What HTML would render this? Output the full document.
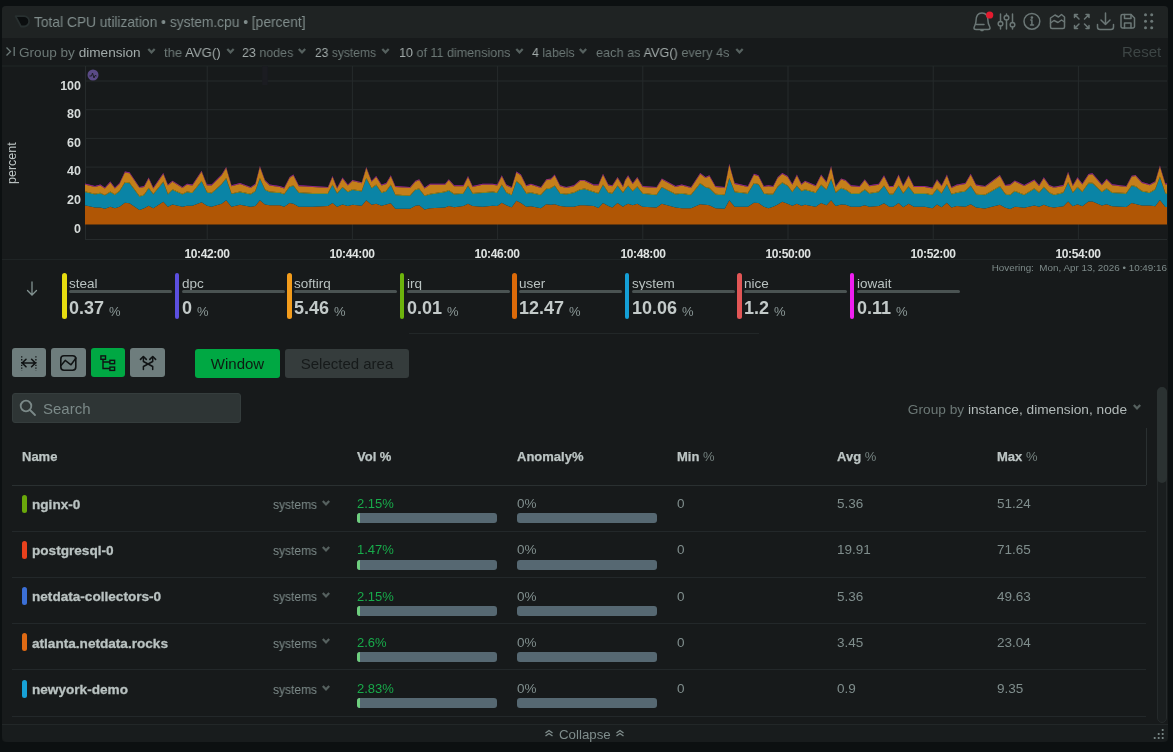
<!DOCTYPE html>
<html><head><meta charset="utf-8">
<style>
*{box-sizing:border-box;margin:0;padding:0}
html,body{width:1173px;height:752px;overflow:hidden;background:#0c1011;font-family:"Liberation Sans",sans-serif}
.abs{position:absolute}
.panel{position:absolute;left:1.5px;top:5.5px;width:1166px;height:736.5px;background:#171a1b;border-radius:4px;overflow:hidden}
.hdr{position:absolute;left:0;top:0;width:100%;height:32px;background:#1f2323}
.t{position:absolute;white-space:nowrap;line-height:1;will-change:transform}
.g{color:#6c7876}
.w{color:#a2abaa}
.chev{position:absolute;width:8px;height:5px}
</style></head><body>
<div class="panel">
  <div class="hdr"></div>
</div>

<!-- header title -->
<svg class="abs" style="left:13px;top:14px" width="18" height="16" viewBox="0 0 18 16">
  <path d="M2.5 2.2 H11 A5.15 5.15 0 0 1 11 12.5 H8 Z" fill="#0b0e0f" stroke="#283030" stroke-width="1.8" stroke-linejoin="round"/>
</svg>
<div class="t g" style="left:34px;top:15px;font-size:14.5px;color:#808d8c;transform:scaleX(0.95);transform-origin:0 0">Total CPU utilization • system.cpu • [percent]</div>

<!-- header icons -->
<svg class="abs" style="left:966px;top:8px" width="200" height="28" viewBox="966 8 200 28" fill="none" stroke="#6b7776" stroke-width="1.5" stroke-linecap="round" stroke-linejoin="round">
  <!-- bell -->
  <path d="M982 13 C977 13 976 17 976 21 C976 25 974 26 974 28 C974 29 975 29.5 976 29.5 H988 C989 29.5 990 29 990 28 C990 26 988 25 988 21 C988 17 987 13 982 13 Z"/>
  <path d="M976.5 24.5 H984"/>
  <path d="M981 30.5 H983"/>
  <circle cx="989.7" cy="15" r="3.6" fill="#e31b2f" stroke="none"/>
  <!-- sliders -->
  <path d="M1000.5 14 V21.5 M1000.5 26 V29 M1006.5 14 V15.5 M1006.5 20 V29 M1012.5 14 V22.5 M1012.5 27 V29"/>
  <circle cx="1000.5" cy="23.7" r="2.3"/>
  <circle cx="1006.5" cy="17.7" r="2.3"/>
  <circle cx="1012.5" cy="24.7" r="2.3"/>
  <!-- info -->
  <circle cx="1031.9" cy="21.3" r="7.9"/>
  <path d="M1031.9 20 V25 M1030.5 25 H1033.5 M1030.8 20 H1032"/>
  <circle cx="1031.9" cy="17.6" r="0.6" fill="#6b7776"/>
  <!-- chart icon -->
  <path d="M1050.5 18 L1055 15 L1058.5 17 L1061.5 14.5 L1064.5 17 V27 A1.5 1.5 0 0 1 1063 28.5 H1052 A1.5 1.5 0 0 1 1050.5 27 Z"/>
  <path d="M1050.5 23 L1054 20.5 L1058 22.5 L1061.5 20 L1064.5 22"/>
  <!-- expand -->
  <path d="M1074.5 14.5 L1079 19 M1074.5 14.5 H1077.5 M1074.5 14.5 V17.5"/>
  <path d="M1089 14.5 L1084.5 19 M1089 14.5 H1086 M1089 14.5 V17.5"/>
  <path d="M1074.5 28.5 L1079 24 M1074.5 28.5 H1077.5 M1074.5 28.5 V25.5"/>
  <path d="M1089 28.5 L1084.5 24 M1089 28.5 H1086 M1089 28.5 V25.5"/>
  <!-- download -->
  <path d="M1105.5 13 V24.5 M1101 20 L1105.5 24.5 L1110 20"/>
  <path d="M1097.5 24.5 V27 A2.5 2.5 0 0 0 1100 29.5 H1111 A2.5 2.5 0 0 0 1113.5 27 V24.5"/>
  <!-- save -->
  <path d="M1121 16 A1.5 1.5 0 0 1 1122.5 14.5 H1131 L1134.5 18 V26.5 A1.5 1.5 0 0 1 1133 28 H1122.5 A1.5 1.5 0 0 1 1121 26.5 Z"/>
  <path d="M1124.5 14.5 V18.5 H1131 V14.5 M1124.5 28 V23 H1131 V28"/>
  <!-- dots -->
  <g fill="#6b7776" stroke="none">
    <circle cx="1145.5" cy="14.7" r="1.5"/><circle cx="1151.7" cy="14.7" r="1.5"/>
    <circle cx="1145.5" cy="21.2" r="1.5"/><circle cx="1151.7" cy="21.2" r="1.5"/>
    <circle cx="1145.5" cy="27.7" r="1.5"/><circle cx="1151.7" cy="27.7" r="1.5"/>
  </g>
</svg>

<!-- toolbar row -->
<svg class="abs" style="left:5px;top:46px" width="12" height="12" viewBox="0 0 12 12" fill="none" stroke="#6c7978" stroke-width="1.3">
  <path d="M1.5 1.5 L5.5 5.5 L1.5 9.5 M9.2 1 V10"/>
</svg>
<div class="t" style="left:19px;top:46.3px;font-size:13.6px"><span class="g">Group by </span><span class="w">dimension</span></div>
<div class="t" style="left:164px;top:46.3px;font-size:13.6px;transform:scaleX(0.964);transform-origin:0 0"><span class="g">the </span><span class="w">AVG()</span></div>
<div class="t" style="left:242px;top:46.3px;font-size:13.6px;transform:scaleX(0.916);transform-origin:0 0"><span class="w">23 </span><span class="g">nodes</span></div>
<div class="t" style="left:315px;top:46.3px;font-size:13.6px;transform:scaleX(0.888);transform-origin:0 0"><span class="w">23 </span><span class="g">systems</span></div>
<div class="t" style="left:399px;top:46.3px;font-size:13.6px;transform:scaleX(0.924);transform-origin:0 0"><span class="w">10 </span><span class="g">of 11 dimensions</span></div>
<div class="t" style="left:532px;top:46.3px;font-size:13.6px;transform:scaleX(0.91);transform-origin:0 0"><span class="w">4 </span><span class="g">labels</span></div>
<div class="t" style="left:596px;top:46.3px;font-size:13.6px;transform:scaleX(0.936);transform-origin:0 0"><span class="g">each as </span><span class="w">AVG()</span><span class="g"> every 4s</span></div>
<div class="t" style="left:1122px;top:44px;font-size:15px;color:#3d4545">Reset</div>
<svg class="abs" style="left:0;top:0" width="1173" height="70" fill="#56615f"><path d="M147.5 49.8 L149.1 48.3 L151.5 50.8 L153.9 48.3 L155.5 49.8 L151.5 54 Z"/><path d="M226.5 49.8 L228.1 48.3 L230.5 50.8 L232.9 48.3 L234.5 49.8 L230.5 54 Z"/><path d="M298 49.8 L299.6 48.3 L302 50.8 L304.4 48.3 L306 49.8 L302 54 Z"/><path d="M381.5 49.8 L383.1 48.3 L385.5 50.8 L387.9 48.3 L389.5 49.8 L385.5 54 Z"/><path d="M515.5 49.8 L517.1 48.3 L519.5 50.8 L521.9 48.3 L523.5 49.8 L519.5 54 Z"/><path d="M579 49.8 L580.6 48.3 L583 50.8 L585.4 48.3 L587 49.8 L583 54 Z"/><path d="M735.5 49.8 L737.1 48.3 L739.5 50.8 L741.9 48.3 L743.5 49.8 L739.5 54 Z"/></svg>

<!-- chart -->
<svg class="abs" style="left:0;top:0" width="1173" height="262">
  <line x1="2" y1="66" x2="1167" y2="66" stroke="#212627" stroke-width="1"/>
  <line x1="85.5" y1="66" x2="85.5" y2="240" stroke="#262b2c" stroke-width="1"/>
  <line x1="85" y1="239.5" x2="1167" y2="239.5" stroke="#262b2c" stroke-width="1"/><line x1="2" y1="259.5" x2="1167" y2="259.5" stroke="#1f2425" stroke-width="1"/>
  <line x1="85" y1="81.0" x2="1167" y2="81.0" stroke="#262b2c" stroke-width="1"/><line x1="85" y1="109.7" x2="1167" y2="109.7" stroke="#262b2c" stroke-width="1"/><line x1="85" y1="138.4" x2="1167" y2="138.4" stroke="#262b2c" stroke-width="1"/><line x1="85" y1="167.1" x2="1167" y2="167.1" stroke="#262b2c" stroke-width="1"/><line x1="85" y1="195.8" x2="1167" y2="195.8" stroke="#262b2c" stroke-width="1"/><line x1="207.2" y1="66" x2="207.2" y2="240" stroke="#262b2c" stroke-width="1"/><line x1="352.4" y1="66" x2="352.4" y2="240" stroke="#262b2c" stroke-width="1"/><line x1="497.6" y1="66" x2="497.6" y2="240" stroke="#262b2c" stroke-width="1"/><line x1="642.8" y1="66" x2="642.8" y2="240" stroke="#262b2c" stroke-width="1"/><line x1="788.0" y1="66" x2="788.0" y2="240" stroke="#262b2c" stroke-width="1"/><line x1="933.2" y1="66" x2="933.2" y2="240" stroke="#262b2c" stroke-width="1"/><line x1="1078.4" y1="66" x2="1078.4" y2="240" stroke="#262b2c" stroke-width="1"/><polygon points="85.0,205.6 85.8,205.6 95.0,207.6 100.3,207.6 104.9,208.8 110.3,206.8 114.9,208.3 119.5,206.8 124.9,202.7 129.5,203.3 139.5,209.9 144.1,208.3 148.7,205.7 153.3,208.3 163.3,201.7 167.9,206.8 172.5,204.5 182.4,206.8 187.0,205.7 192.4,205.7 201.6,202.2 207.0,205.7 211.6,206.8 221.6,203.7 226.2,200.2 231.5,206.8 240.0,204.8 250.7,206.8 255.3,206.0 259.9,200.2 265.0,204.5 269.6,205.3 279.6,205.3 284.2,206.8 289.6,203.0 293.4,203.7 298.8,206.8 312.6,206.8 327.9,206.0 332.5,203.0 337.1,206.8 342.5,204.5 347.9,206.0 352.5,204.8 361.7,205.7 366.3,200.2 371.6,204.8 376.2,203.7 381.6,205.7 386.2,204.5 390.8,203.3 395.4,208.8 410.0,208.8 415.4,205.7 419.2,205.3 424.6,209.4 430.0,208.3 445.0,207.6 448.8,206.0 454.2,207.3 463.4,206.0 468.0,203.7 472.6,206.0 482.6,206.8 492.6,205.7 497.2,206.0 501.8,202.7 506.4,205.3 511.7,207.3 516.4,200.7 521.0,203.0 526.3,206.8 530.9,206.3 540.9,208.3 546.3,204.2 550.9,204.8 554.7,204.2 560.1,206.0 566.2,206.8 573.9,206.8 580.0,205.3 584.6,205.3 593.8,206.0 598.4,207.9 603.0,203.0 608.4,206.0 612.3,207.6 617.6,203.0 623.0,206.8 625.0,205.3 628.1,203.7 632.7,205.3 637.3,203.7 642.6,206.8 656.5,207.6 661.8,203.7 675.6,207.6 681.8,208.3 691.0,208.3 700.2,204.2 705.6,204.8 709.4,205.3 715.5,208.3 724.7,208.8 729.3,200.2 734.7,206.8 747.8,206.8 753.9,202.7 758.5,203.0 763.9,206.8 768.5,208.3 773.1,206.8 777.7,204.5 782.3,201.7 787.7,203.7 792.3,205.7 796.9,203.7 801.5,205.7 805.0,204.8 815.7,206.8 821.1,203.0 826.5,205.3 831.1,200.2 835.7,206.0 841.1,204.5 845.7,204.8 851.0,206.8 859.5,206.8 864.8,205.3 869.4,206.8 878.7,206.0 884.0,203.3 889.4,206.8 893.2,206.8 898.6,203.0 903.2,207.3 908.6,203.7 913.9,206.8 924.7,206.8 932.4,208.3 937.0,204.5 941.6,207.3 946.9,202.7 951.5,207.6 956.9,206.0 965.3,206.8 970.7,204.2 976.1,207.6 985.0,208.6 999.9,204.7 1005.4,207.8 1010.1,208.9 1014.8,206.7 1024.2,207.8 1034.4,205.5 1039.1,206.7 1043.8,204.7 1049.3,206.7 1054.0,207.4 1063.4,206.3 1068.1,201.6 1072.8,206.3 1077.5,204.2 1082.3,206.3 1088.5,201.6 1092.5,201.6 1101.9,205.5 1106.6,204.2 1112.1,206.3 1126.2,207.1 1131.7,203.1 1135.6,203.9 1141.9,205.5 1149.7,205.5 1155.2,206.3 1159.9,200.0 1165.4,207.1 1167.0,207.1 1167.0,207.1 1167.0,224.5 1167.0,224.5 1165.4,224.5 1159.9,224.5 1155.2,224.5 1149.7,224.5 1141.9,224.5 1135.6,224.5 1131.7,224.5 1126.2,224.5 1112.1,224.5 1106.6,224.5 1101.9,224.5 1092.5,224.5 1088.5,224.5 1082.3,224.5 1077.5,224.5 1072.8,224.5 1068.1,224.5 1063.4,224.5 1054.0,224.5 1049.3,224.5 1043.8,224.5 1039.1,224.5 1034.4,224.5 1024.2,224.5 1014.8,224.5 1010.1,224.5 1005.4,224.5 999.9,224.5 985.0,224.5 976.1,224.5 970.7,224.5 965.3,224.5 956.9,224.5 951.5,224.5 946.9,224.5 941.6,224.5 937.0,224.5 932.4,224.5 924.7,224.5 913.9,224.5 908.6,224.5 903.2,224.5 898.6,224.5 893.2,224.5 889.4,224.5 884.0,224.5 878.7,224.5 869.4,224.5 864.8,224.5 859.5,224.5 851.0,224.5 845.7,224.5 841.1,224.5 835.7,224.5 831.1,224.5 826.5,224.5 821.1,224.5 815.7,224.5 805.0,224.5 801.5,224.5 796.9,224.5 792.3,224.5 787.7,224.5 782.3,224.5 777.7,224.5 773.1,224.5 768.5,224.5 763.9,224.5 758.5,224.5 753.9,224.5 747.8,224.5 734.7,224.5 729.3,224.5 724.7,224.5 715.5,224.5 709.4,224.5 705.6,224.5 700.2,224.5 691.0,224.5 681.8,224.5 675.6,224.5 661.8,224.5 656.5,224.5 642.6,224.5 637.3,224.5 632.7,224.5 628.1,224.5 625.0,224.5 623.0,224.5 617.6,224.5 612.3,224.5 608.4,224.5 603.0,224.5 598.4,224.5 593.8,224.5 584.6,224.5 580.0,224.5 573.9,224.5 566.2,224.5 560.1,224.5 554.7,224.5 550.9,224.5 546.3,224.5 540.9,224.5 530.9,224.5 526.3,224.5 521.0,224.5 516.4,224.5 511.7,224.5 506.4,224.5 501.8,224.5 497.2,224.5 492.6,224.5 482.6,224.5 472.6,224.5 468.0,224.5 463.4,224.5 454.2,224.5 448.8,224.5 445.0,224.5 430.0,224.5 424.6,224.5 419.2,224.5 415.4,224.5 410.0,224.5 395.4,224.5 390.8,224.5 386.2,224.5 381.6,224.5 376.2,224.5 371.6,224.5 366.3,224.5 361.7,224.5 352.5,224.5 347.9,224.5 342.5,224.5 337.1,224.5 332.5,224.5 327.9,224.5 312.6,224.5 298.8,224.5 293.4,224.5 289.6,224.5 284.2,224.5 279.6,224.5 269.6,224.5 265.0,224.5 259.9,224.5 255.3,224.5 250.7,224.5 240.0,224.5 231.5,224.5 226.2,224.5 221.6,224.5 211.6,224.5 207.0,224.5 201.6,224.5 192.4,224.5 187.0,224.5 182.4,224.5 172.5,224.5 167.9,224.5 163.3,224.5 153.3,224.5 148.7,224.5 144.1,224.5 139.5,224.5 129.5,224.5 124.9,224.5 119.5,224.5 114.9,224.5 110.3,224.5 104.9,224.5 100.3,224.5 95.0,224.5 85.8,224.5 85.0,224.5" fill="#b05605"/><polygon points="85.0,192.2 85.8,192.2 95.0,194.5 100.3,193.5 104.9,195.6 110.3,192.2 114.9,195.0 119.5,191.5 124.9,182.7 129.5,183.3 139.5,196.8 144.1,195.3 148.7,188.4 153.3,194.5 163.3,182.2 167.9,194.5 172.5,189.9 182.4,194.5 187.0,192.2 192.4,193.0 201.6,181.5 207.0,192.5 211.6,193.5 221.6,184.6 226.2,178.7 231.5,194.1 240.0,192.2 250.7,194.5 255.3,191.5 259.9,178.7 265.0,189.9 269.6,192.2 279.6,193.0 284.2,194.5 289.6,186.9 293.4,186.1 298.8,193.0 312.6,193.8 327.9,193.8 332.5,185.3 337.1,193.8 342.5,187.6 347.9,192.2 352.5,189.9 361.7,191.5 366.3,178.4 371.6,188.4 376.2,185.3 381.6,193.0 386.2,191.5 390.8,185.3 395.4,195.3 410.0,196.1 415.4,189.9 419.2,189.2 424.6,196.1 430.0,194.5 445.0,192.2 448.8,190.7 454.2,194.5 463.4,193.8 468.0,186.1 472.6,193.8 482.6,193.0 492.6,192.2 497.2,193.0 501.8,185.3 506.4,193.0 511.7,195.3 516.4,181.5 521.0,185.3 526.3,193.8 530.9,193.0 540.9,195.3 546.3,189.2 550.9,188.4 554.7,186.1 560.1,193.8 566.2,194.5 573.9,193.0 580.0,189.9 584.6,189.2 593.8,192.2 598.4,193.8 603.0,185.3 608.4,193.0 612.3,193.8 617.6,186.1 623.0,193.0 625.0,189.9 628.1,186.1 632.7,191.5 637.3,186.9 642.6,193.8 656.5,195.3 661.8,187.6 675.6,194.5 681.8,193.8 691.0,195.3 700.2,183.8 705.6,187.6 709.4,188.4 715.5,194.5 724.7,195.3 729.3,178.4 734.7,192.2 747.8,193.8 753.9,183.8 758.5,184.6 763.9,193.8 768.5,194.5 773.1,194.5 777.7,186.9 782.3,183.0 787.7,186.1 792.3,192.2 796.9,186.1 801.5,191.5 805.0,189.9 815.7,193.0 821.1,185.3 826.5,189.9 831.1,179.2 835.7,193.0 841.1,188.4 845.7,189.9 851.0,193.8 859.5,193.8 864.8,189.9 869.4,193.8 878.7,192.2 884.0,186.1 889.4,194.5 893.2,194.5 898.6,186.1 903.2,193.8 908.6,186.9 913.9,193.8 924.7,193.8 932.4,195.3 937.0,189.2 941.6,193.8 946.9,184.6 951.5,194.5 956.9,193.0 965.3,191.5 970.7,186.1 976.1,194.5 985.0,195.3 999.9,186.7 1005.4,194.5 1010.1,195.3 1014.8,191.4 1024.2,195.3 1034.4,189.0 1039.1,192.9 1043.8,187.5 1049.3,192.9 1054.0,195.3 1063.4,192.9 1068.1,182.7 1072.8,192.9 1077.5,187.5 1082.3,192.2 1088.5,183.5 1092.5,183.5 1101.9,192.2 1106.6,189.0 1112.1,192.9 1126.2,193.7 1131.7,185.9 1135.6,186.7 1141.9,191.4 1149.7,192.9 1155.2,189.8 1159.9,177.3 1165.4,193.7 1167.0,193.7 1167.0,193.7 1167.0,207.1 1167.0,207.1 1165.4,207.1 1159.9,200.0 1155.2,206.3 1149.7,205.5 1141.9,205.5 1135.6,203.9 1131.7,203.1 1126.2,207.1 1112.1,206.3 1106.6,204.2 1101.9,205.5 1092.5,201.6 1088.5,201.6 1082.3,206.3 1077.5,204.2 1072.8,206.3 1068.1,201.6 1063.4,206.3 1054.0,207.4 1049.3,206.7 1043.8,204.7 1039.1,206.7 1034.4,205.5 1024.2,207.8 1014.8,206.7 1010.1,208.9 1005.4,207.8 999.9,204.7 985.0,208.6 976.1,207.6 970.7,204.2 965.3,206.8 956.9,206.0 951.5,207.6 946.9,202.7 941.6,207.3 937.0,204.5 932.4,208.3 924.7,206.8 913.9,206.8 908.6,203.7 903.2,207.3 898.6,203.0 893.2,206.8 889.4,206.8 884.0,203.3 878.7,206.0 869.4,206.8 864.8,205.3 859.5,206.8 851.0,206.8 845.7,204.8 841.1,204.5 835.7,206.0 831.1,200.2 826.5,205.3 821.1,203.0 815.7,206.8 805.0,204.8 801.5,205.7 796.9,203.7 792.3,205.7 787.7,203.7 782.3,201.7 777.7,204.5 773.1,206.8 768.5,208.3 763.9,206.8 758.5,203.0 753.9,202.7 747.8,206.8 734.7,206.8 729.3,200.2 724.7,208.8 715.5,208.3 709.4,205.3 705.6,204.8 700.2,204.2 691.0,208.3 681.8,208.3 675.6,207.6 661.8,203.7 656.5,207.6 642.6,206.8 637.3,203.7 632.7,205.3 628.1,203.7 625.0,205.3 623.0,206.8 617.6,203.0 612.3,207.6 608.4,206.0 603.0,203.0 598.4,207.9 593.8,206.0 584.6,205.3 580.0,205.3 573.9,206.8 566.2,206.8 560.1,206.0 554.7,204.2 550.9,204.8 546.3,204.2 540.9,208.3 530.9,206.3 526.3,206.8 521.0,203.0 516.4,200.7 511.7,207.3 506.4,205.3 501.8,202.7 497.2,206.0 492.6,205.7 482.6,206.8 472.6,206.0 468.0,203.7 463.4,206.0 454.2,207.3 448.8,206.0 445.0,207.6 430.0,208.3 424.6,209.4 419.2,205.3 415.4,205.7 410.0,208.8 395.4,208.8 390.8,203.3 386.2,204.5 381.6,205.7 376.2,203.7 371.6,204.8 366.3,200.2 361.7,205.7 352.5,204.8 347.9,206.0 342.5,204.5 337.1,206.8 332.5,203.0 327.9,206.0 312.6,206.8 298.8,206.8 293.4,203.7 289.6,203.0 284.2,206.8 279.6,205.3 269.6,205.3 265.0,204.5 259.9,200.2 255.3,206.0 250.7,206.8 240.0,204.8 231.5,206.8 226.2,200.2 221.6,203.7 211.6,206.8 207.0,205.7 201.6,202.2 192.4,205.7 187.0,205.7 182.4,206.8 172.5,204.5 167.9,206.8 163.3,201.7 153.3,208.3 148.7,205.7 144.1,208.3 139.5,209.9 129.5,203.3 124.9,202.7 119.5,206.8 114.9,208.3 110.3,206.8 104.9,208.8 100.3,207.6 95.0,207.6 85.8,205.6 85.0,205.6" fill="#0a84a6"/><polygon points="85.0,191.5 85.8,191.5 95.0,193.8 100.3,192.8 104.9,194.9 110.3,191.5 114.9,194.3 119.5,190.8 124.9,182.0 129.5,182.6 139.5,196.1 144.1,194.6 148.7,187.7 153.3,193.8 163.3,181.5 167.9,193.8 172.5,189.2 182.4,193.8 187.0,191.5 192.4,192.3 201.6,180.8 207.0,191.8 211.6,192.8 221.6,183.9 226.2,178.0 231.5,193.4 240.0,191.5 250.7,193.8 255.3,190.8 259.9,178.0 265.0,189.2 269.6,191.5 279.6,192.3 284.2,193.8 289.6,186.2 293.4,185.4 298.8,192.3 312.6,193.1 327.9,193.1 332.5,184.6 337.1,193.1 342.5,186.9 347.9,191.5 352.5,189.2 361.7,190.8 366.3,177.7 371.6,187.7 376.2,184.6 381.6,192.3 386.2,190.8 390.8,184.6 395.4,194.6 410.0,195.4 415.4,189.2 419.2,188.5 424.6,195.4 430.0,193.8 445.0,191.5 448.8,190.0 454.2,193.8 463.4,193.1 468.0,185.4 472.6,193.1 482.6,192.3 492.6,191.5 497.2,192.3 501.8,184.6 506.4,192.3 511.7,194.6 516.4,180.8 521.0,184.6 526.3,193.1 530.9,192.3 540.9,194.6 546.3,188.5 550.9,187.7 554.7,185.4 560.1,193.1 566.2,193.8 573.9,192.3 580.0,189.2 584.6,188.5 593.8,191.5 598.4,193.1 603.0,184.6 608.4,192.3 612.3,193.1 617.6,185.4 623.0,192.3 625.0,189.2 628.1,185.4 632.7,190.8 637.3,186.2 642.6,193.1 656.5,194.6 661.8,186.9 675.6,193.8 681.8,193.1 691.0,194.6 700.2,183.1 705.6,186.9 709.4,187.7 715.5,193.8 724.7,194.6 729.3,177.7 734.7,191.5 747.8,193.1 753.9,183.1 758.5,183.9 763.9,193.1 768.5,193.8 773.1,193.8 777.7,186.2 782.3,182.3 787.7,185.4 792.3,191.5 796.9,185.4 801.5,190.8 805.0,189.2 815.7,192.3 821.1,184.6 826.5,189.2 831.1,178.5 835.7,192.3 841.1,187.7 845.7,189.2 851.0,193.1 859.5,193.1 864.8,189.2 869.4,193.1 878.7,191.5 884.0,185.4 889.4,193.8 893.2,193.8 898.6,185.4 903.2,193.1 908.6,186.2 913.9,193.1 924.7,193.1 932.4,194.6 937.0,188.5 941.6,193.1 946.9,183.9 951.5,193.8 956.9,192.3 965.3,190.8 970.7,185.4 976.1,193.8 985.0,194.6 999.9,186.0 1005.4,193.8 1010.1,194.6 1014.8,190.7 1024.2,194.6 1034.4,188.3 1039.1,192.2 1043.8,186.8 1049.3,192.2 1054.0,194.6 1063.4,192.2 1068.1,182.0 1072.8,192.2 1077.5,186.8 1082.3,191.5 1088.5,182.8 1092.5,182.8 1101.9,191.5 1106.6,188.3 1112.1,192.2 1126.2,193.0 1131.7,185.2 1135.6,186.0 1141.9,190.7 1149.7,192.2 1155.2,189.1 1159.9,176.6 1165.4,193.0 1167.0,193.0 1167.0,193.0 1167.0,193.7 1167.0,193.7 1165.4,193.7 1159.9,177.3 1155.2,189.8 1149.7,192.9 1141.9,191.4 1135.6,186.7 1131.7,185.9 1126.2,193.7 1112.1,192.9 1106.6,189.0 1101.9,192.2 1092.5,183.5 1088.5,183.5 1082.3,192.2 1077.5,187.5 1072.8,192.9 1068.1,182.7 1063.4,192.9 1054.0,195.3 1049.3,192.9 1043.8,187.5 1039.1,192.9 1034.4,189.0 1024.2,195.3 1014.8,191.4 1010.1,195.3 1005.4,194.5 999.9,186.7 985.0,195.3 976.1,194.5 970.7,186.1 965.3,191.5 956.9,193.0 951.5,194.5 946.9,184.6 941.6,193.8 937.0,189.2 932.4,195.3 924.7,193.8 913.9,193.8 908.6,186.9 903.2,193.8 898.6,186.1 893.2,194.5 889.4,194.5 884.0,186.1 878.7,192.2 869.4,193.8 864.8,189.9 859.5,193.8 851.0,193.8 845.7,189.9 841.1,188.4 835.7,193.0 831.1,179.2 826.5,189.9 821.1,185.3 815.7,193.0 805.0,189.9 801.5,191.5 796.9,186.1 792.3,192.2 787.7,186.1 782.3,183.0 777.7,186.9 773.1,194.5 768.5,194.5 763.9,193.8 758.5,184.6 753.9,183.8 747.8,193.8 734.7,192.2 729.3,178.4 724.7,195.3 715.5,194.5 709.4,188.4 705.6,187.6 700.2,183.8 691.0,195.3 681.8,193.8 675.6,194.5 661.8,187.6 656.5,195.3 642.6,193.8 637.3,186.9 632.7,191.5 628.1,186.1 625.0,189.9 623.0,193.0 617.6,186.1 612.3,193.8 608.4,193.0 603.0,185.3 598.4,193.8 593.8,192.2 584.6,189.2 580.0,189.9 573.9,193.0 566.2,194.5 560.1,193.8 554.7,186.1 550.9,188.4 546.3,189.2 540.9,195.3 530.9,193.0 526.3,193.8 521.0,185.3 516.4,181.5 511.7,195.3 506.4,193.0 501.8,185.3 497.2,193.0 492.6,192.2 482.6,193.0 472.6,193.8 468.0,186.1 463.4,193.8 454.2,194.5 448.8,190.7 445.0,192.2 430.0,194.5 424.6,196.1 419.2,189.2 415.4,189.9 410.0,196.1 395.4,195.3 390.8,185.3 386.2,191.5 381.6,193.0 376.2,185.3 371.6,188.4 366.3,178.4 361.7,191.5 352.5,189.9 347.9,192.2 342.5,187.6 337.1,193.8 332.5,185.3 327.9,193.8 312.6,193.8 298.8,193.0 293.4,186.1 289.6,186.9 284.2,194.5 279.6,193.0 269.6,192.2 265.0,189.9 259.9,178.7 255.3,191.5 250.7,194.5 240.0,192.2 231.5,194.1 226.2,178.7 221.6,184.6 211.6,193.5 207.0,192.5 201.6,181.5 192.4,193.0 187.0,192.2 182.4,194.5 172.5,189.9 167.9,194.5 163.3,182.2 153.3,194.5 148.7,188.4 144.1,195.3 139.5,196.8 129.5,183.3 124.9,182.7 119.5,191.5 114.9,195.0 110.3,192.2 104.9,195.6 100.3,193.5 95.0,194.5 85.8,192.2 85.0,192.2" fill="#a9a51c"/><polygon points="85.0,184.8 85.8,184.8 95.0,187.1 100.3,185.6 104.9,188.6 110.3,182.5 114.9,188.6 119.5,184.0 124.9,172.5 129.5,173.3 139.5,187.9 144.1,187.1 148.7,178.6 153.3,188.6 163.3,174.0 167.9,185.6 172.5,181.7 182.4,187.9 187.0,184.8 192.4,185.6 201.6,171.7 207.0,185.6 211.6,185.6 221.6,175.6 226.2,167.9 231.5,186.3 240.0,184.0 250.7,187.9 255.3,184.8 259.9,167.1 265.0,180.9 269.6,185.6 279.6,187.1 284.2,188.6 289.6,177.9 293.4,175.6 298.8,186.3 312.6,187.1 327.9,187.9 332.5,177.1 337.1,188.6 342.5,178.6 347.9,185.6 352.5,180.9 361.7,183.2 366.3,167.9 371.6,181.7 376.2,177.1 381.6,185.6 386.2,184.0 390.8,176.3 395.4,187.1 410.0,187.9 415.4,181.7 419.2,180.2 424.6,188.6 430.0,184.8 445.0,184.8 448.8,180.2 454.2,186.3 463.4,186.3 468.0,177.1 472.6,187.1 482.6,184.8 492.6,184.8 497.2,185.6 501.8,176.3 506.4,185.6 511.7,187.9 516.4,172.5 521.0,175.6 526.3,186.3 530.9,184.8 540.9,187.9 546.3,180.2 550.9,179.4 554.7,175.6 560.1,186.3 566.2,187.9 573.9,186.3 580.0,180.9 584.6,180.9 593.8,185.6 598.4,185.6 603.0,174.8 608.4,185.6 612.3,186.3 617.6,177.9 623.0,187.1 625.0,180.9 628.1,176.3 632.7,184.0 637.3,177.9 642.6,187.1 656.5,187.9 661.8,179.4 675.6,187.1 681.8,185.6 691.0,187.9 700.2,174.0 705.6,177.9 709.4,176.3 715.5,187.1 724.7,187.9 729.3,164.8 734.7,184.0 747.8,187.1 753.9,174.8 758.5,176.3 763.9,187.1 768.5,186.3 773.1,187.1 777.7,177.9 782.3,174.0 787.7,177.1 792.3,184.8 796.9,175.6 801.5,184.8 805.0,181.7 815.7,186.3 821.1,175.6 826.5,182.5 831.1,167.1 835.7,187.1 841.1,179.4 845.7,180.9 851.0,186.3 859.5,187.1 864.8,180.2 869.4,186.3 878.7,184.8 884.0,176.3 889.4,187.1 893.2,187.1 898.6,175.6 903.2,186.3 908.6,176.3 913.9,187.1 924.7,187.1 932.4,188.6 937.0,180.2 941.6,186.3 946.9,175.6 951.5,187.9 956.9,185.6 965.3,184.0 970.7,174.8 976.1,185.6 985.0,186.9 999.9,175.9 1005.4,186.1 1010.1,185.3 1014.8,181.4 1024.2,186.1 1034.4,180.6 1039.1,186.1 1043.8,178.3 1049.3,186.1 1054.0,187.7 1063.4,186.1 1068.1,172.8 1072.8,186.1 1077.5,178.3 1082.3,184.5 1088.5,175.1 1092.5,174.3 1101.9,185.3 1106.6,179.8 1112.1,185.3 1126.2,186.9 1131.7,176.7 1135.6,175.9 1141.9,183.0 1149.7,185.3 1155.2,182.2 1159.9,166.5 1165.4,184.5 1167.0,184.5 1167.0,184.5 1167.0,193.0 1167.0,193.0 1165.4,193.0 1159.9,176.6 1155.2,189.1 1149.7,192.2 1141.9,190.7 1135.6,186.0 1131.7,185.2 1126.2,193.0 1112.1,192.2 1106.6,188.3 1101.9,191.5 1092.5,182.8 1088.5,182.8 1082.3,191.5 1077.5,186.8 1072.8,192.2 1068.1,182.0 1063.4,192.2 1054.0,194.6 1049.3,192.2 1043.8,186.8 1039.1,192.2 1034.4,188.3 1024.2,194.6 1014.8,190.7 1010.1,194.6 1005.4,193.8 999.9,186.0 985.0,194.6 976.1,193.8 970.7,185.4 965.3,190.8 956.9,192.3 951.5,193.8 946.9,183.9 941.6,193.1 937.0,188.5 932.4,194.6 924.7,193.1 913.9,193.1 908.6,186.2 903.2,193.1 898.6,185.4 893.2,193.8 889.4,193.8 884.0,185.4 878.7,191.5 869.4,193.1 864.8,189.2 859.5,193.1 851.0,193.1 845.7,189.2 841.1,187.7 835.7,192.3 831.1,178.5 826.5,189.2 821.1,184.6 815.7,192.3 805.0,189.2 801.5,190.8 796.9,185.4 792.3,191.5 787.7,185.4 782.3,182.3 777.7,186.2 773.1,193.8 768.5,193.8 763.9,193.1 758.5,183.9 753.9,183.1 747.8,193.1 734.7,191.5 729.3,177.7 724.7,194.6 715.5,193.8 709.4,187.7 705.6,186.9 700.2,183.1 691.0,194.6 681.8,193.1 675.6,193.8 661.8,186.9 656.5,194.6 642.6,193.1 637.3,186.2 632.7,190.8 628.1,185.4 625.0,189.2 623.0,192.3 617.6,185.4 612.3,193.1 608.4,192.3 603.0,184.6 598.4,193.1 593.8,191.5 584.6,188.5 580.0,189.2 573.9,192.3 566.2,193.8 560.1,193.1 554.7,185.4 550.9,187.7 546.3,188.5 540.9,194.6 530.9,192.3 526.3,193.1 521.0,184.6 516.4,180.8 511.7,194.6 506.4,192.3 501.8,184.6 497.2,192.3 492.6,191.5 482.6,192.3 472.6,193.1 468.0,185.4 463.4,193.1 454.2,193.8 448.8,190.0 445.0,191.5 430.0,193.8 424.6,195.4 419.2,188.5 415.4,189.2 410.0,195.4 395.4,194.6 390.8,184.6 386.2,190.8 381.6,192.3 376.2,184.6 371.6,187.7 366.3,177.7 361.7,190.8 352.5,189.2 347.9,191.5 342.5,186.9 337.1,193.1 332.5,184.6 327.9,193.1 312.6,193.1 298.8,192.3 293.4,185.4 289.6,186.2 284.2,193.8 279.6,192.3 269.6,191.5 265.0,189.2 259.9,178.0 255.3,190.8 250.7,193.8 240.0,191.5 231.5,193.4 226.2,178.0 221.6,183.9 211.6,192.8 207.0,191.8 201.6,180.8 192.4,192.3 187.0,191.5 182.4,193.8 172.5,189.2 167.9,193.8 163.3,181.5 153.3,193.8 148.7,187.7 144.1,194.6 139.5,196.1 129.5,182.6 124.9,182.0 119.5,190.8 114.9,194.3 110.3,191.5 104.9,194.9 100.3,192.8 95.0,193.8 85.8,191.5 85.0,191.5" fill="#c47f1a"/><polygon points="85.0,184.2 85.8,184.2 95.0,186.5 100.3,185.0 104.9,188.0 110.3,181.9 114.9,188.0 119.5,183.4 124.9,171.9 129.5,172.7 139.5,187.3 144.1,186.5 148.7,178.0 153.3,188.0 163.3,173.4 167.9,185.0 172.5,181.1 182.4,187.3 187.0,184.2 192.4,185.0 201.6,171.1 207.0,185.0 211.6,185.0 221.6,175.0 226.2,167.3 231.5,185.7 240.0,183.4 250.7,187.3 255.3,184.2 259.9,166.5 265.0,180.3 269.6,185.0 279.6,186.5 284.2,188.0 289.6,177.3 293.4,175.0 298.8,185.7 312.6,186.5 327.9,187.3 332.5,176.5 337.1,188.0 342.5,178.0 347.9,185.0 352.5,180.3 361.7,182.6 366.3,167.3 371.6,181.1 376.2,176.5 381.6,185.0 386.2,183.4 390.8,175.7 395.4,186.5 410.0,187.3 415.4,181.1 419.2,179.6 424.6,188.0 430.0,184.2 445.0,184.2 448.8,179.6 454.2,185.7 463.4,185.7 468.0,176.5 472.6,186.5 482.6,184.2 492.6,184.2 497.2,185.0 501.8,175.7 506.4,185.0 511.7,187.3 516.4,171.9 521.0,175.0 526.3,185.7 530.9,184.2 540.9,187.3 546.3,179.6 550.9,178.8 554.7,175.0 560.1,185.7 566.2,187.3 573.9,185.7 580.0,180.3 584.6,180.3 593.8,185.0 598.4,185.0 603.0,174.2 608.4,185.0 612.3,185.7 617.6,177.3 623.0,186.5 625.0,180.3 628.1,175.7 632.7,183.4 637.3,177.3 642.6,186.5 656.5,187.3 661.8,178.8 675.6,186.5 681.8,185.0 691.0,187.3 700.2,173.4 705.6,177.3 709.4,175.7 715.5,186.5 724.7,187.3 729.3,164.2 734.7,183.4 747.8,186.5 753.9,174.2 758.5,175.7 763.9,186.5 768.5,185.7 773.1,186.5 777.7,177.3 782.3,173.4 787.7,176.5 792.3,184.2 796.9,175.0 801.5,184.2 805.0,181.1 815.7,185.7 821.1,175.0 826.5,181.9 831.1,166.5 835.7,186.5 841.1,178.8 845.7,180.3 851.0,185.7 859.5,186.5 864.8,179.6 869.4,185.7 878.7,184.2 884.0,175.7 889.4,186.5 893.2,186.5 898.6,175.0 903.2,185.7 908.6,175.7 913.9,186.5 924.7,186.5 932.4,188.0 937.0,179.6 941.6,185.7 946.9,175.0 951.5,187.3 956.9,185.0 965.3,183.4 970.7,174.2 976.1,185.0 985.0,186.3 999.9,175.3 1005.4,185.5 1010.1,184.7 1014.8,180.8 1024.2,185.5 1034.4,180.0 1039.1,185.5 1043.8,177.7 1049.3,185.5 1054.0,187.1 1063.4,185.5 1068.1,172.2 1072.8,185.5 1077.5,177.7 1082.3,183.9 1088.5,174.5 1092.5,173.7 1101.9,184.7 1106.6,179.2 1112.1,184.7 1126.2,186.3 1131.7,176.1 1135.6,175.3 1141.9,182.4 1149.7,184.7 1155.2,181.6 1159.9,165.9 1165.4,183.9 1167.0,183.9 1167.0,183.9 1167.0,184.5 1167.0,184.5 1165.4,184.5 1159.9,166.5 1155.2,182.2 1149.7,185.3 1141.9,183.0 1135.6,175.9 1131.7,176.7 1126.2,186.9 1112.1,185.3 1106.6,179.8 1101.9,185.3 1092.5,174.3 1088.5,175.1 1082.3,184.5 1077.5,178.3 1072.8,186.1 1068.1,172.8 1063.4,186.1 1054.0,187.7 1049.3,186.1 1043.8,178.3 1039.1,186.1 1034.4,180.6 1024.2,186.1 1014.8,181.4 1010.1,185.3 1005.4,186.1 999.9,175.9 985.0,186.9 976.1,185.6 970.7,174.8 965.3,184.0 956.9,185.6 951.5,187.9 946.9,175.6 941.6,186.3 937.0,180.2 932.4,188.6 924.7,187.1 913.9,187.1 908.6,176.3 903.2,186.3 898.6,175.6 893.2,187.1 889.4,187.1 884.0,176.3 878.7,184.8 869.4,186.3 864.8,180.2 859.5,187.1 851.0,186.3 845.7,180.9 841.1,179.4 835.7,187.1 831.1,167.1 826.5,182.5 821.1,175.6 815.7,186.3 805.0,181.7 801.5,184.8 796.9,175.6 792.3,184.8 787.7,177.1 782.3,174.0 777.7,177.9 773.1,187.1 768.5,186.3 763.9,187.1 758.5,176.3 753.9,174.8 747.8,187.1 734.7,184.0 729.3,164.8 724.7,187.9 715.5,187.1 709.4,176.3 705.6,177.9 700.2,174.0 691.0,187.9 681.8,185.6 675.6,187.1 661.8,179.4 656.5,187.9 642.6,187.1 637.3,177.9 632.7,184.0 628.1,176.3 625.0,180.9 623.0,187.1 617.6,177.9 612.3,186.3 608.4,185.6 603.0,174.8 598.4,185.6 593.8,185.6 584.6,180.9 580.0,180.9 573.9,186.3 566.2,187.9 560.1,186.3 554.7,175.6 550.9,179.4 546.3,180.2 540.9,187.9 530.9,184.8 526.3,186.3 521.0,175.6 516.4,172.5 511.7,187.9 506.4,185.6 501.8,176.3 497.2,185.6 492.6,184.8 482.6,184.8 472.6,187.1 468.0,177.1 463.4,186.3 454.2,186.3 448.8,180.2 445.0,184.8 430.0,184.8 424.6,188.6 419.2,180.2 415.4,181.7 410.0,187.9 395.4,187.1 390.8,176.3 386.2,184.0 381.6,185.6 376.2,177.1 371.6,181.7 366.3,167.9 361.7,183.2 352.5,180.9 347.9,185.6 342.5,178.6 337.1,188.6 332.5,177.1 327.9,187.9 312.6,187.1 298.8,186.3 293.4,175.6 289.6,177.9 284.2,188.6 279.6,187.1 269.6,185.6 265.0,180.9 259.9,167.1 255.3,184.8 250.7,187.9 240.0,184.0 231.5,186.3 226.2,167.9 221.6,175.6 211.6,185.6 207.0,185.6 201.6,171.7 192.4,185.6 187.0,184.8 182.4,187.9 172.5,181.7 167.9,185.6 163.3,174.0 153.3,188.6 148.7,178.6 144.1,187.1 139.5,187.9 129.5,173.3 124.9,172.5 119.5,184.0 114.9,188.6 110.3,182.5 104.9,188.6 100.3,185.6 95.0,187.1 85.8,184.8 85.0,184.8" fill="#b34a6a"/><polygon points="85.0,183.8 85.8,183.8 95.0,186.1 100.3,184.6 104.9,187.6 110.3,181.5 114.9,187.6 119.5,183.0 124.9,171.5 129.5,172.3 139.5,186.9 144.1,186.1 148.7,177.6 153.3,187.6 163.3,173.0 167.9,184.6 172.5,180.7 182.4,186.9 187.0,183.8 192.4,184.6 201.6,170.7 207.0,184.6 211.6,184.6 221.6,174.6 226.2,166.9 231.5,185.3 240.0,183.0 250.7,186.9 255.3,183.8 259.9,166.1 265.0,179.9 269.6,184.6 279.6,186.1 284.2,187.6 289.6,176.9 293.4,174.6 298.8,185.3 312.6,186.1 327.9,186.9 332.5,176.1 337.1,187.6 342.5,177.6 347.9,184.6 352.5,179.9 361.7,182.2 366.3,166.9 371.6,180.7 376.2,176.1 381.6,184.6 386.2,183.0 390.8,175.3 395.4,186.1 410.0,186.9 415.4,180.7 419.2,179.2 424.6,187.6 430.0,183.8 445.0,183.8 448.8,179.2 454.2,185.3 463.4,185.3 468.0,176.1 472.6,186.1 482.6,183.8 492.6,183.8 497.2,184.6 501.8,175.3 506.4,184.6 511.7,186.9 516.4,171.5 521.0,174.6 526.3,185.3 530.9,183.8 540.9,186.9 546.3,179.2 550.9,178.4 554.7,174.6 560.1,185.3 566.2,186.9 573.9,185.3 580.0,179.9 584.6,179.9 593.8,184.6 598.4,184.6 603.0,173.8 608.4,184.6 612.3,185.3 617.6,176.9 623.0,186.1 625.0,179.9 628.1,175.3 632.7,183.0 637.3,176.9 642.6,186.1 656.5,186.9 661.8,178.4 675.6,186.1 681.8,184.6 691.0,186.9 700.2,173.0 705.6,176.9 709.4,175.3 715.5,186.1 724.7,186.9 729.3,163.8 734.7,183.0 747.8,186.1 753.9,173.8 758.5,175.3 763.9,186.1 768.5,185.3 773.1,186.1 777.7,176.9 782.3,173.0 787.7,176.1 792.3,183.8 796.9,174.6 801.5,183.8 805.0,180.7 815.7,185.3 821.1,174.6 826.5,181.5 831.1,166.1 835.7,186.1 841.1,178.4 845.7,179.9 851.0,185.3 859.5,186.1 864.8,179.2 869.4,185.3 878.7,183.8 884.0,175.3 889.4,186.1 893.2,186.1 898.6,174.6 903.2,185.3 908.6,175.3 913.9,186.1 924.7,186.1 932.4,187.6 937.0,179.2 941.6,185.3 946.9,174.6 951.5,186.9 956.9,184.6 965.3,183.0 970.7,173.8 976.1,184.6 985.0,185.9 999.9,174.9 1005.4,185.1 1010.1,184.3 1014.8,180.4 1024.2,185.1 1034.4,179.6 1039.1,185.1 1043.8,177.3 1049.3,185.1 1054.0,186.7 1063.4,185.1 1068.1,171.8 1072.8,185.1 1077.5,177.3 1082.3,183.5 1088.5,174.1 1092.5,173.3 1101.9,184.3 1106.6,178.8 1112.1,184.3 1126.2,185.9 1131.7,175.7 1135.6,174.9 1141.9,182.0 1149.7,184.3 1155.2,181.2 1159.9,165.5 1165.4,183.5 1167.0,183.5 1167.0,183.5 1167.0,183.9 1167.0,183.9 1165.4,183.9 1159.9,165.9 1155.2,181.6 1149.7,184.7 1141.9,182.4 1135.6,175.3 1131.7,176.1 1126.2,186.3 1112.1,184.7 1106.6,179.2 1101.9,184.7 1092.5,173.7 1088.5,174.5 1082.3,183.9 1077.5,177.7 1072.8,185.5 1068.1,172.2 1063.4,185.5 1054.0,187.1 1049.3,185.5 1043.8,177.7 1039.1,185.5 1034.4,180.0 1024.2,185.5 1014.8,180.8 1010.1,184.7 1005.4,185.5 999.9,175.3 985.0,186.3 976.1,185.0 970.7,174.2 965.3,183.4 956.9,185.0 951.5,187.3 946.9,175.0 941.6,185.7 937.0,179.6 932.4,188.0 924.7,186.5 913.9,186.5 908.6,175.7 903.2,185.7 898.6,175.0 893.2,186.5 889.4,186.5 884.0,175.7 878.7,184.2 869.4,185.7 864.8,179.6 859.5,186.5 851.0,185.7 845.7,180.3 841.1,178.8 835.7,186.5 831.1,166.5 826.5,181.9 821.1,175.0 815.7,185.7 805.0,181.1 801.5,184.2 796.9,175.0 792.3,184.2 787.7,176.5 782.3,173.4 777.7,177.3 773.1,186.5 768.5,185.7 763.9,186.5 758.5,175.7 753.9,174.2 747.8,186.5 734.7,183.4 729.3,164.2 724.7,187.3 715.5,186.5 709.4,175.7 705.6,177.3 700.2,173.4 691.0,187.3 681.8,185.0 675.6,186.5 661.8,178.8 656.5,187.3 642.6,186.5 637.3,177.3 632.7,183.4 628.1,175.7 625.0,180.3 623.0,186.5 617.6,177.3 612.3,185.7 608.4,185.0 603.0,174.2 598.4,185.0 593.8,185.0 584.6,180.3 580.0,180.3 573.9,185.7 566.2,187.3 560.1,185.7 554.7,175.0 550.9,178.8 546.3,179.6 540.9,187.3 530.9,184.2 526.3,185.7 521.0,175.0 516.4,171.9 511.7,187.3 506.4,185.0 501.8,175.7 497.2,185.0 492.6,184.2 482.6,184.2 472.6,186.5 468.0,176.5 463.4,185.7 454.2,185.7 448.8,179.6 445.0,184.2 430.0,184.2 424.6,188.0 419.2,179.6 415.4,181.1 410.0,187.3 395.4,186.5 390.8,175.7 386.2,183.4 381.6,185.0 376.2,176.5 371.6,181.1 366.3,167.3 361.7,182.6 352.5,180.3 347.9,185.0 342.5,178.0 337.1,188.0 332.5,176.5 327.9,187.3 312.6,186.5 298.8,185.7 293.4,175.0 289.6,177.3 284.2,188.0 279.6,186.5 269.6,185.0 265.0,180.3 259.9,166.5 255.3,184.2 250.7,187.3 240.0,183.4 231.5,185.7 226.2,167.3 221.6,175.0 211.6,185.0 207.0,185.0 201.6,171.1 192.4,185.0 187.0,184.2 182.4,187.3 172.5,181.1 167.9,185.0 163.3,173.4 153.3,188.0 148.7,178.0 144.1,186.5 139.5,187.3 129.5,172.7 124.9,171.9 119.5,183.4 114.9,188.0 110.3,181.9 104.9,188.0 100.3,185.0 95.0,186.5 85.8,184.2 85.0,184.2" fill="#bf1fc0"/>
  <rect x="262.2" y="66" width="5.5" height="19" fill="#1b1c21"/><circle cx="93" cy="75" r="5.5" fill="#5a4a86"/>
  <path d="M89.5 76 L91.5 76 L92.5 73 L94 78 L95 75.5 L96.5 76" fill="none" stroke="#1b1d24" stroke-width="1"/>
</svg>
<div class="t" style="left:55.2px;top:80px;width:26px;text-align:right;font-size:12.5px;color:#d6dbda;font-weight:700">100</div>
<div class="t" style="left:55.2px;top:108px;width:26px;text-align:right;font-size:12.5px;color:#d6dbda;font-weight:700">80</div>
<div class="t" style="left:55.2px;top:137px;width:26px;text-align:right;font-size:12.5px;color:#d6dbda;font-weight:700">60</div>
<div class="t" style="left:55.2px;top:165px;width:26px;text-align:right;font-size:12.5px;color:#d6dbda;font-weight:700">40</div>
<div class="t" style="left:55.2px;top:194px;width:26px;text-align:right;font-size:12.5px;color:#d6dbda;font-weight:700">20</div>
<div class="t" style="left:55.2px;top:223px;width:26px;text-align:right;font-size:12.5px;color:#d6dbda;font-weight:700">0</div>
<div class="t" style="left:6px;top:183.5px;font-size:12.5px;color:#bdc5c4;transform:rotate(-90deg);transform-origin:0 0">percent</div>
<div class="t" style="left:167.0px;top:248px;width:80px;text-align:center;font-size:12px;letter-spacing:-0.35px;color:#dfe3e2;font-weight:700">10:42:00</div>
<div class="t" style="left:312.2px;top:248px;width:80px;text-align:center;font-size:12px;letter-spacing:-0.35px;color:#dfe3e2;font-weight:700">10:44:00</div>
<div class="t" style="left:457.4px;top:248px;width:80px;text-align:center;font-size:12px;letter-spacing:-0.35px;color:#dfe3e2;font-weight:700">10:46:00</div>
<div class="t" style="left:602.6px;top:248px;width:80px;text-align:center;font-size:12px;letter-spacing:-0.35px;color:#dfe3e2;font-weight:700">10:48:00</div>
<div class="t" style="left:747.8px;top:248px;width:80px;text-align:center;font-size:12px;letter-spacing:-0.35px;color:#dfe3e2;font-weight:700">10:50:00</div>
<div class="t" style="left:893.0px;top:248px;width:80px;text-align:center;font-size:12px;letter-spacing:-0.35px;color:#dfe3e2;font-weight:700">10:52:00</div>
<div class="t" style="left:1038.2px;top:248px;width:80px;text-align:center;font-size:12px;letter-spacing:-0.35px;color:#dfe3e2;font-weight:700">10:54:00</div>
<div class="t" style="left:900px;top:263px;width:267px;text-align:right;font-size:9.85px;color:#7d8a89">Hovering:&nbsp; Mon, Apr 13, 2026 • 10:49:16</div>

<svg class="abs" style="left:25px;top:281px" width="14" height="16" viewBox="0 0 14 16" fill="none" stroke="#829291" stroke-width="1.3" stroke-linecap="round"><path d="M7 1 V14 M2.5 9.5 L7 14 L11.5 9.5"/></svg><div class="abs" style="left:62.0px;top:273.2px;width:4.5px;height:45.4px;border-radius:3px;background:#e6dc10"></div><div class="t" style="left:69.0px;top:277px;font-size:13.5px;color:#b9c2c1">steal</div><div class="abs" style="left:69.0px;top:290px;width:103px;height:3px;border-radius:2px;background:#4a5352"></div><div class="t" style="left:69.0px;top:298.5px;font-size:18px;font-weight:700;color:#c3cac9">0.37<span style="font-size:13px;font-weight:400;color:#8a9796;margin-left:5px;position:relative;top:2px">%</span></div><div class="abs" style="left:174.5px;top:273.2px;width:4.5px;height:45.4px;border-radius:3px;background:#5b4fdf"></div><div class="t" style="left:181.5px;top:277px;font-size:13.5px;color:#b9c2c1">dpc</div><div class="abs" style="left:181.5px;top:290px;width:103px;height:3px;border-radius:2px;background:#4a5352"></div><div class="t" style="left:181.5px;top:298.5px;font-size:18px;font-weight:700;color:#c3cac9">0<span style="font-size:13px;font-weight:400;color:#8a9796;margin-left:5px;position:relative;top:2px">%</span></div><div class="abs" style="left:287.0px;top:273.2px;width:4.5px;height:45.4px;border-radius:3px;background:#f39c1c"></div><div class="t" style="left:294.0px;top:277px;font-size:13.5px;color:#b9c2c1">softirq</div><div class="abs" style="left:294.0px;top:290px;width:103px;height:3px;border-radius:2px;background:#4a5352"></div><div class="t" style="left:294.0px;top:298.5px;font-size:18px;font-weight:700;color:#c3cac9">5.46<span style="font-size:13px;font-weight:400;color:#8a9796;margin-left:5px;position:relative;top:2px">%</span></div><div class="abs" style="left:399.5px;top:273.2px;width:4.5px;height:45.4px;border-radius:3px;background:#6db30c"></div><div class="t" style="left:406.5px;top:277px;font-size:13.5px;color:#b9c2c1">irq</div><div class="abs" style="left:406.5px;top:290px;width:103px;height:3px;border-radius:2px;background:#4a5352"></div><div class="t" style="left:406.5px;top:298.5px;font-size:18px;font-weight:700;color:#c3cac9">0.01<span style="font-size:13px;font-weight:400;color:#8a9796;margin-left:5px;position:relative;top:2px">%</span></div><div class="abs" style="left:512.0px;top:273.2px;width:4.5px;height:45.4px;border-radius:3px;background:#dc6a09"></div><div class="t" style="left:519.0px;top:277px;font-size:13.5px;color:#b9c2c1">user</div><div class="abs" style="left:519.0px;top:290px;width:103px;height:3px;border-radius:2px;background:#4a5352"></div><div class="t" style="left:519.0px;top:298.5px;font-size:18px;font-weight:700;color:#c3cac9">12.47<span style="font-size:13px;font-weight:400;color:#8a9796;margin-left:5px;position:relative;top:2px">%</span></div><div class="abs" style="left:624.5px;top:273.2px;width:4.5px;height:45.4px;border-radius:3px;background:#149fd6"></div><div class="t" style="left:631.5px;top:277px;font-size:13.5px;color:#b9c2c1">system</div><div class="abs" style="left:631.5px;top:290px;width:103px;height:3px;border-radius:2px;background:#4a5352"></div><div class="t" style="left:631.5px;top:298.5px;font-size:18px;font-weight:700;color:#c3cac9">10.06<span style="font-size:13px;font-weight:400;color:#8a9796;margin-left:5px;position:relative;top:2px">%</span></div><div class="abs" style="left:737.0px;top:273.2px;width:4.5px;height:45.4px;border-radius:3px;background:#e25656"></div><div class="t" style="left:744.0px;top:277px;font-size:13.5px;color:#b9c2c1">nice</div><div class="abs" style="left:744.0px;top:290px;width:103px;height:3px;border-radius:2px;background:#4a5352"></div><div class="t" style="left:744.0px;top:298.5px;font-size:18px;font-weight:700;color:#c3cac9">1.2<span style="font-size:13px;font-weight:400;color:#8a9796;margin-left:5px;position:relative;top:2px">%</span></div><div class="abs" style="left:849.5px;top:273.2px;width:4.5px;height:45.4px;border-radius:3px;background:#ef1ff0"></div><div class="t" style="left:856.5px;top:277px;font-size:13.5px;color:#b9c2c1">iowait</div><div class="abs" style="left:856.5px;top:290px;width:103px;height:3px;border-radius:2px;background:#4a5352"></div><div class="t" style="left:856.5px;top:298.5px;font-size:18px;font-weight:700;color:#c3cac9">0.11<span style="font-size:13px;font-weight:400;color:#8a9796;margin-left:5px;position:relative;top:2px">%</span></div><div class="abs" style="left:409px;top:332.5px;width:350px;height:1px;background:#222728"></div>
<div class="abs" style="left:12px;top:348.3px;width:34px;height:29px;border-radius:3px;background:#6e7d7d"></div>
<div class="abs" style="left:51px;top:348.3px;width:35px;height:29px;border-radius:3px;background:#6e7d7d"></div>
<div class="abs" style="left:91px;top:348.3px;width:34px;height:29px;border-radius:3px;background:#00a843"></div>
<div class="abs" style="left:130px;top:348.3px;width:35px;height:29px;border-radius:3px;background:#6e7d7d"></div>
<svg class="abs" style="left:0;top:340px" width="170" height="45" fill="none" stroke="#101314" stroke-width="1.5" stroke-linecap="round" stroke-linejoin="round">
  <path d="M21.7 16.3 V30.5 M35.9 16.3 V30.5" stroke-dasharray="1.3 1.5" stroke-width="1.3" stroke-linecap="butt"/>
  <path d="M22 23 H35.6 M26 19.3 L22.2 23 L26 26.8 M31.6 19.3 L35.4 23 L31.6 26.8" stroke-width="1.6"/>
  <rect x="60.8" y="15.8" width="15" height="14.5" rx="3.2" stroke-width="1.6"/>
  <path d="M61 25.5 L65.2 20.4 L71 24.8 L76 18" stroke-width="1.5"/>
  <rect x="100.9" y="15.9" width="4.6" height="3.4" stroke-width="1.4" stroke-linecap="butt" stroke-linejoin="miter"/>
  <rect x="109.9" y="20.3" width="4.7" height="3.4" stroke-width="1.4" stroke-linecap="butt" stroke-linejoin="miter"/>
  <rect x="109.9" y="27.1" width="4.7" height="3.3" stroke-width="1.4" stroke-linecap="butt" stroke-linejoin="miter"/>
  <path d="M103 19.6 V28.5 H109.9 M103 22 H109.9" stroke-width="1.4" stroke-linecap="butt" stroke-linejoin="miter"/>
  <path d="M143.4 29.5 V26.5 L152.7 21.5 V17 M152.7 29.5 V26.5 L143.4 21.5 V17" stroke-width="1.5"/>
  <path d="M149.8 19.4 L152.7 16.5 L155.6 19.4 M140.5 19.4 L143.4 16.5 L146.3 19.4" stroke-width="1.6"/>
</svg>
<div class="abs" style="left:195px;top:348.5px;width:85px;height:29px;border-radius:3px;background:#00a843"></div>
<div class="t" style="left:195px;top:356px;width:85px;text-align:center;font-size:15px;color:#0d1a12">Window</div>
<div class="abs" style="left:285px;top:348.5px;width:124px;height:29px;border-radius:3px;background:#353c3c"></div>
<div class="t" style="left:285px;top:356px;width:124px;text-align:center;font-size:15px;color:#161a1a">Selected area</div>
<div class="abs" style="left:12px;top:393px;width:229px;height:30px;border-radius:3px;background:#2e3535;border:1px solid #353d3d"></div>
<svg class="abs" style="left:18px;top:398px" width="22" height="20" fill="none" stroke="#7b8988" stroke-width="1.8" stroke-linecap="round"><circle cx="8" cy="8" r="5.3"/><path d="M12 12 L17 17"/></svg>
<div class="t" style="left:43px;top:401px;font-size:15px;color:#7b8988">Search</div>
<div class="t" style="left:850px;top:402.5px;width:291px;text-align:right;font-size:13.7px;padding-right:14px"><span class="g">Group by </span><span style="color:#b2bab9">instance, dimension, node</span></div>
<svg class="abs" style="left:1132px;top:404px" width="10" height="8" fill="#56615f"><path d="M1 1.8 L2.6 0.3 L5 2.8 L7.4 0.3 L9 1.8 L5 6 Z"/></svg>
<div class="abs" style="left:1157px;top:387px;width:10px;height:335.5px;background:#1a1e1f;border:1px solid #252a2b;border-radius:5px"></div>
<div class="abs" style="left:1157px;top:387px;width:10px;height:96px;background:#2b3232;border-radius:5px"></div>


<div class="abs" style="left:1146px;top:428px;width:1px;height:57px;background:#2a3031"></div><div class="t" style="left:22px;top:450.3px;font-size:13px;font-weight:700;color:#bcc5c4;-webkit-text-stroke:0.25px #bcc5c4">Name<span style="font-weight:400;color:#73807e;-webkit-text-stroke:0"></span></div><div class="t" style="left:357px;top:450.3px;font-size:13px;font-weight:700;color:#bcc5c4;-webkit-text-stroke:0.25px #bcc5c4">Vol %<span style="font-weight:400;color:#73807e;-webkit-text-stroke:0"></span></div><div class="t" style="left:517px;top:450.3px;font-size:13px;font-weight:700;color:#bcc5c4;-webkit-text-stroke:0.25px #bcc5c4">Anomaly%<span style="font-weight:400;color:#73807e;-webkit-text-stroke:0"></span></div><div class="t" style="left:677px;top:450.3px;font-size:13px;font-weight:700;color:#bcc5c4;-webkit-text-stroke:0.25px #bcc5c4">Min<span style="font-weight:400;color:#73807e;-webkit-text-stroke:0"> %</span></div><div class="t" style="left:837px;top:450.3px;font-size:13px;font-weight:700;color:#bcc5c4;-webkit-text-stroke:0.25px #bcc5c4">Avg<span style="font-weight:400;color:#73807e;-webkit-text-stroke:0"> %</span></div><div class="t" style="left:997px;top:450.3px;font-size:13px;font-weight:700;color:#bcc5c4;-webkit-text-stroke:0.25px #bcc5c4">Max<span style="font-weight:400;color:#73807e;-webkit-text-stroke:0"> %</span></div><div class="abs" style="left:12px;top:484.5px;width:1134px;height:1px;background:#2a3031"></div><div class="abs" style="left:21.8px;top:494.5px;width:4.8px;height:18px;border-radius:3px;background:#6aa80b"></div><div class="t" style="left:31.5px;top:497.6px;font-size:13.6px;font-weight:700;color:#b9c2c1;-webkit-text-stroke:0.3px #b9c2c1">nginx-0</div><div class="t" style="left:273px;top:498.7px;font-size:12.5px;color:#7f8d8c;transform:scaleX(0.96);transform-origin:0 0">systems</div><svg class="abs" style="left:321px;top:499.5px" width="10" height="8" fill="#56615f"><path d="M1 1.8 L2.6 0.3 L5 2.8 L7.4 0.3 L9 1.8 L5 6 Z"/></svg><div class="t" style="left:356.5px;top:497.0px;font-size:13px;color:#18aa4a">2.15%</div><div class="abs" style="left:357px;top:513.2px;width:140px;height:10px;border-radius:3px;background:#566872;overflow:hidden"><div style="width:3px;height:100%;background:#6fcf7f"></div></div><div class="t" style="left:517px;top:497.0px;font-size:13.5px;color:#7f8d8c">0%</div><div class="abs" style="left:517px;top:513.2px;width:140px;height:10px;border-radius:3px;background:#566872"></div><div class="t" style="left:677px;top:497.0px;font-size:13.5px;color:#7f8d8c">0</div><div class="t" style="left:837px;top:497.0px;font-size:13.5px;color:#7f8d8c">5.36</div><div class="t" style="left:997px;top:497.0px;font-size:13.5px;color:#7f8d8c">51.24</div><div class="abs" style="left:12px;top:530.5px;width:1134px;height:1px;background:#23282a"></div><div class="abs" style="left:21.8px;top:540.8px;width:4.8px;height:18px;border-radius:3px;background:#e8411d"></div><div class="t" style="left:31.5px;top:543.9px;font-size:13.6px;font-weight:700;color:#b9c2c1;-webkit-text-stroke:0.3px #b9c2c1">postgresql-0</div><div class="t" style="left:273px;top:545.0px;font-size:12.5px;color:#7f8d8c;transform:scaleX(0.96);transform-origin:0 0">systems</div><svg class="abs" style="left:321px;top:545.8px" width="10" height="8" fill="#56615f"><path d="M1 1.8 L2.6 0.3 L5 2.8 L7.4 0.3 L9 1.8 L5 6 Z"/></svg><div class="t" style="left:356.5px;top:543.3px;font-size:13px;color:#18aa4a">1.47%</div><div class="abs" style="left:357px;top:559.5px;width:140px;height:10px;border-radius:3px;background:#566872;overflow:hidden"><div style="width:3px;height:100%;background:#6fcf7f"></div></div><div class="t" style="left:517px;top:543.3px;font-size:13.5px;color:#7f8d8c">0%</div><div class="abs" style="left:517px;top:559.5px;width:140px;height:10px;border-radius:3px;background:#566872"></div><div class="t" style="left:677px;top:543.3px;font-size:13.5px;color:#7f8d8c">0</div><div class="t" style="left:837px;top:543.3px;font-size:13.5px;color:#7f8d8c">19.91</div><div class="t" style="left:997px;top:543.3px;font-size:13.5px;color:#7f8d8c">71.65</div><div class="abs" style="left:12px;top:576.8px;width:1134px;height:1px;background:#23282a"></div><div class="abs" style="left:21.8px;top:587.1px;width:4.8px;height:18px;border-radius:3px;background:#3b6fd6"></div><div class="t" style="left:31.5px;top:590.2px;font-size:13.6px;font-weight:700;color:#b9c2c1;-webkit-text-stroke:0.3px #b9c2c1">netdata-collectors-0</div><div class="t" style="left:273px;top:591.3000000000001px;font-size:12.5px;color:#7f8d8c;transform:scaleX(0.96);transform-origin:0 0">systems</div><svg class="abs" style="left:321px;top:592.1px" width="10" height="8" fill="#56615f"><path d="M1 1.8 L2.6 0.3 L5 2.8 L7.4 0.3 L9 1.8 L5 6 Z"/></svg><div class="t" style="left:356.5px;top:589.6px;font-size:13px;color:#18aa4a">2.15%</div><div class="abs" style="left:357px;top:605.8000000000001px;width:140px;height:10px;border-radius:3px;background:#566872;overflow:hidden"><div style="width:3px;height:100%;background:#6fcf7f"></div></div><div class="t" style="left:517px;top:589.6px;font-size:13.5px;color:#7f8d8c">0%</div><div class="abs" style="left:517px;top:605.8000000000001px;width:140px;height:10px;border-radius:3px;background:#566872"></div><div class="t" style="left:677px;top:589.6px;font-size:13.5px;color:#7f8d8c">0</div><div class="t" style="left:837px;top:589.6px;font-size:13.5px;color:#7f8d8c">5.36</div><div class="t" style="left:997px;top:589.6px;font-size:13.5px;color:#7f8d8c">49.63</div><div class="abs" style="left:12px;top:623.1px;width:1134px;height:1px;background:#23282a"></div><div class="abs" style="left:21.8px;top:633.4px;width:4.8px;height:18px;border-radius:3px;background:#df6a14"></div><div class="t" style="left:31.5px;top:636.5px;font-size:13.6px;font-weight:700;color:#b9c2c1;-webkit-text-stroke:0.3px #b9c2c1">atlanta.netdata.rocks</div><div class="t" style="left:273px;top:637.6px;font-size:12.5px;color:#7f8d8c;transform:scaleX(0.96);transform-origin:0 0">systems</div><svg class="abs" style="left:321px;top:638.4px" width="10" height="8" fill="#56615f"><path d="M1 1.8 L2.6 0.3 L5 2.8 L7.4 0.3 L9 1.8 L5 6 Z"/></svg><div class="t" style="left:356.5px;top:635.9px;font-size:13px;color:#18aa4a">2.6%</div><div class="abs" style="left:357px;top:652.1px;width:140px;height:10px;border-radius:3px;background:#566872;overflow:hidden"><div style="width:3px;height:100%;background:#6fcf7f"></div></div><div class="t" style="left:517px;top:635.9px;font-size:13.5px;color:#7f8d8c">0%</div><div class="abs" style="left:517px;top:652.1px;width:140px;height:10px;border-radius:3px;background:#566872"></div><div class="t" style="left:677px;top:635.9px;font-size:13.5px;color:#7f8d8c">0</div><div class="t" style="left:837px;top:635.9px;font-size:13.5px;color:#7f8d8c">3.45</div><div class="t" style="left:997px;top:635.9px;font-size:13.5px;color:#7f8d8c">23.04</div><div class="abs" style="left:12px;top:669.4px;width:1134px;height:1px;background:#23282a"></div><div class="abs" style="left:21.8px;top:679.7px;width:4.8px;height:18px;border-radius:3px;background:#17a1d6"></div><div class="t" style="left:31.5px;top:682.8000000000001px;font-size:13.6px;font-weight:700;color:#b9c2c1;-webkit-text-stroke:0.3px #b9c2c1">newyork-demo</div><div class="t" style="left:273px;top:683.9000000000001px;font-size:12.5px;color:#7f8d8c;transform:scaleX(0.96);transform-origin:0 0">systems</div><svg class="abs" style="left:321px;top:684.7px" width="10" height="8" fill="#56615f"><path d="M1 1.8 L2.6 0.3 L5 2.8 L7.4 0.3 L9 1.8 L5 6 Z"/></svg><div class="t" style="left:356.5px;top:682.2px;font-size:13px;color:#18aa4a">2.83%</div><div class="abs" style="left:357px;top:698.4000000000001px;width:140px;height:10px;border-radius:3px;background:#566872;overflow:hidden"><div style="width:3px;height:100%;background:#6fcf7f"></div></div><div class="t" style="left:517px;top:682.2px;font-size:13.5px;color:#7f8d8c">0%</div><div class="abs" style="left:517px;top:698.4000000000001px;width:140px;height:10px;border-radius:3px;background:#566872"></div><div class="t" style="left:677px;top:682.2px;font-size:13.5px;color:#7f8d8c">0</div><div class="t" style="left:837px;top:682.2px;font-size:13.5px;color:#7f8d8c">0.9</div><div class="t" style="left:997px;top:682.2px;font-size:13.5px;color:#7f8d8c">9.35</div><div class="abs" style="left:12px;top:715.7px;width:1134px;height:1px;background:#23282a"></div><div class="abs" style="left:2px;top:723.5px;width:1165.5px;height:1px;background:#222728"></div><div class="abs" style="left:2px;top:724.5px;width:1165.5px;height:17.5px;background:#181c1d;border-radius:0 0 6px 6px"></div><div class="t" style="left:559px;top:727.5px;font-size:13.3px;color:#7f8d8c">Collapse</div><svg class="abs" style="left:543.5px;top:729px" width="10" height="8" fill="none" stroke="#7f8d8c" stroke-width="1.3"><path d="M1.5 4 L5 1.5 L8.5 4 M1.5 7 L5 4.5 L8.5 7"/></svg><svg class="abs" style="left:614.8px;top:729px" width="10" height="8" fill="none" stroke="#7f8d8c" stroke-width="1.3"><path d="M1.5 4 L5 1.5 L8.5 4 M1.5 7 L5 4.5 L8.5 7"/></svg><svg class="abs" style="left:1150px;top:727px" width="16" height="14" fill="#7f8d8c"><circle cx="12.7" cy="3" r="1.1"/><circle cx="8.7" cy="7" r="1.1"/><circle cx="12.7" cy="7" r="1.1"/><circle cx="4.7" cy="11" r="1.1"/><circle cx="8.7" cy="11" r="1.1"/><circle cx="12.7" cy="11" r="1.1"/></svg>

</body></html>
